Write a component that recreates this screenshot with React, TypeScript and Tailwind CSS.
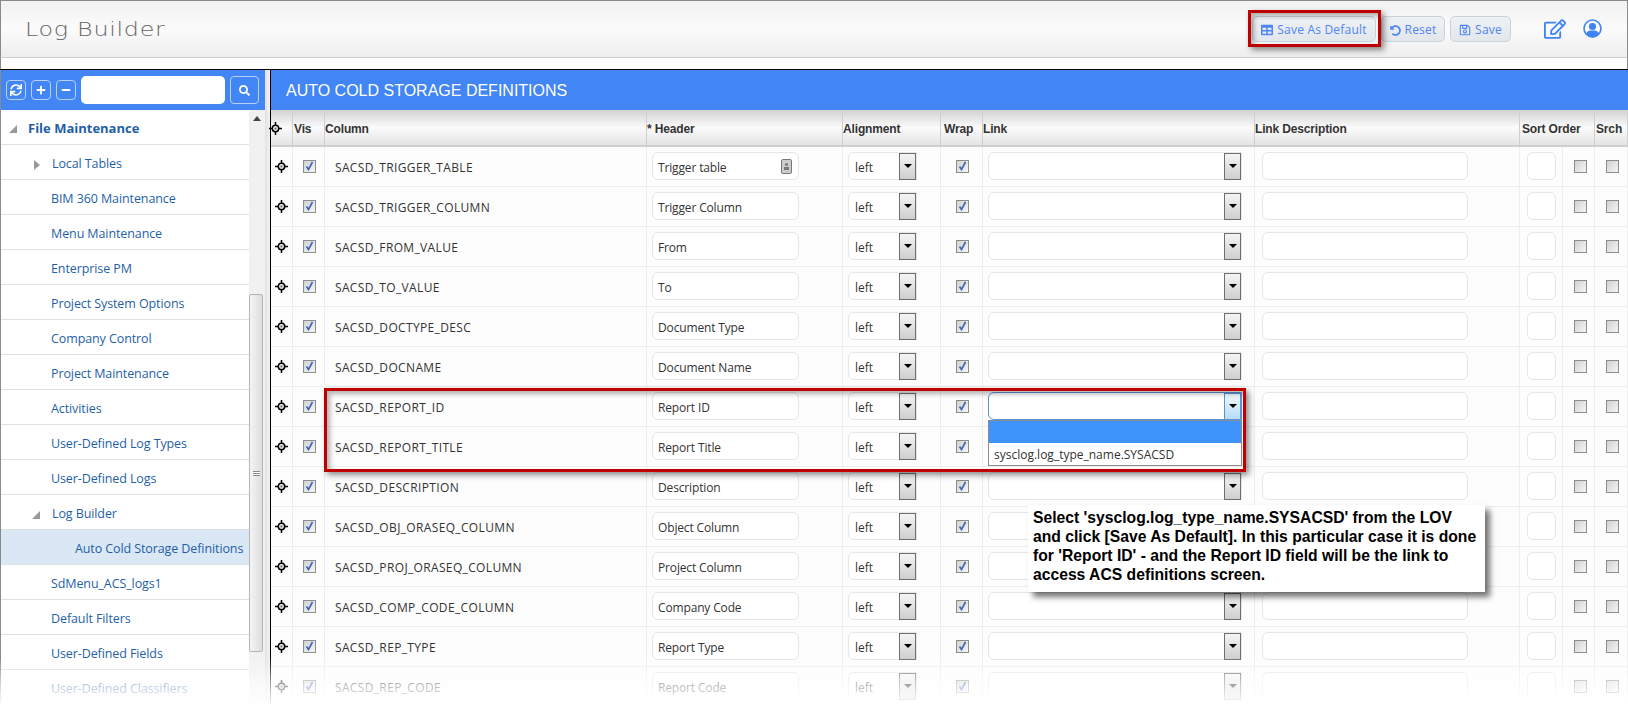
import React from "react";
import { FaTable, FaUndoAlt, FaRegSave, FaSync, FaPlus, FaMinus, FaSearch, FaRegEdit } from "react-icons/fa";

const GRID = "grid grid-cols-[22px_32px_322px_196px_98px_42px_272px_265px_43px_32px_33px]";
const UI = "font-['Open_Sans','Noto_Sans',sans-serif]";

const rows = [
  ["SACSD_TRIGGER_TABLE", "Trigger table"],
  ["SACSD_TRIGGER_COLUMN", "Trigger Column"],
  ["SACSD_FROM_VALUE", "From"],
  ["SACSD_TO_VALUE", "To"],
  ["SACSD_DOCTYPE_DESC", "Document Type"],
  ["SACSD_DOCNAME", "Document Name"],
  ["SACSD_REPORT_ID", "Report ID"],
  ["SACSD_REPORT_TITLE", "Report Title"],
  ["SACSD_DESCRIPTION", "Description"],
  ["SACSD_OBJ_ORASEQ_COLUMN", "Object Column"],
  ["SACSD_PROJ_ORASEQ_COLUMN", "Project Column"],
  ["SACSD_COMP_CODE_COLUMN", "Company Code"],
  ["SACSD_REP_TYPE", "Report Type"],
  ["SACSD_REP_CODE", "Report Code"],
];

const menu: [string, number, string?, boolean?][] = [
  ["File Maintenance", 28, "open", true],
  ["Local Tables", 52, "closed"],
  ["BIM 360 Maintenance", 51],
  ["Menu Maintenance", 51],
  ["Enterprise PM", 51],
  ["Project System Options", 51],
  ["Company Control", 51],
  ["Project Maintenance", 51],
  ["Activities", 51],
  ["User-Defined Log Types", 51],
  ["User-Defined Logs", 51],
  ["Log Builder", 52, "open"],
  ["Auto Cold Storage Definitions", 75],
  ["SdMenu_ACS_logs1", 51],
  ["Default Filters", 51],
  ["User-Defined Fields", 51],
  ["User-Defined Classifiers", 51],
];

function MoveIcon() {
  return (
    <svg width="13" height="13" viewBox="0 0 13 13" fill="none" stroke="#000">
      <circle cx="6.5" cy="6.5" r="3.2" strokeWidth="1.5" />
      <path d="M6.5 0v4M6.5 9v4M0 6.5h4M9 6.5h4" strokeWidth="1.5" />
      <rect x="5.5" y="5.5" width="2" height="2" fill="#666" stroke="none" />
    </svg>
  );
}

function UserIcon() {
  return (
    <svg width="19" height="20" viewBox="0 0 19 20" fill="#3f84f5">
      <circle cx="9.5" cy="9.5" r="8.5" fill="none" stroke="#3f84f5" strokeWidth="1.6" />
      <circle cx="9.5" cy="7.5" r="3.6" />
      <path d="M3 15c1-3 3-3.6 4-3.6h5c1 0 3 .6 4 3.6-1.5 2-4 3.4-6.5 3.4S4.500 17 3 15z" />
    </svg>
  );
}

function Check({ on = true }: { on?: boolean }) {
  return (
    <span className="flex h-[13px] w-[13px] items-center justify-center border border-[#8c8c8c] bg-gradient-to-br from-[#d2d2d2] to-[#f6f6f6]">
      {on && (
        <svg width="9" height="10" viewBox="0 0 9 10" fill="none">
          <path d="M1.500 5.500 3.500 8.500 7.500 1" stroke="#4a66b8" strokeWidth="1.700" />
        </svg>
      )}
    </span>
  );
}

function DropButton({ focus = false }: { focus?: boolean }) {
  return (
    <span
      className={
        "flex h-[27px] w-[17px] shrink-0 items-center justify-center border bg-gradient-to-b " +
        (focus ? "border-[#5b93d8] from-[#f3f9fe] to-[#b5dcf6]" : "border-[#6e6e6e] from-[#f4f4f4] to-[#cfcfcf]")
      }
    >
      <span className="h-0 w-0 border-x-[4px] border-t-[4px] border-x-transparent border-t-black" />
    </span>
  );
}

function Select({ width, value, focus = false }: { width: string; value?: string; focus?: boolean }) {
  return (
    <div className={`flex h-[28px] items-center justify-between rounded-l-[6px] border bg-white pl-[6px] text-[12px] text-[#333] ${width} ${focus ? "border-[#5b93d8]" : "border-[#e2e7ec]"}`}>
      <span className="pt-[4px]">{value}</span>
      <DropButton focus={focus} />
    </div>
  );
}

function Input({ width, value, icon = false }: { width: string; value?: string; icon?: boolean }) {
  return (
    <div className={`flex h-[28px] items-center justify-between rounded-[6px] border border-[#e2e7ec] bg-white pl-[5px] pr-[6px] text-[12px] tracking-[-0.15px] text-[#333] ${width}`}>
      <span className="pt-[3px]">{value}</span>
      {icon && (
        <span className="flex h-[15px] w-[11px] flex-col items-center justify-center gap-px rounded-[2px] border border-[#777] bg-[#ccc]">
          <span className="h-[3px] w-[3px] rounded-full bg-[#777]" />
          <span className="h-[3px] w-[5px] bg-[#777]" />
        </span>
      )}
    </div>
  );
}

function TopButton({ icon, label, width }: { icon: React.ReactNode; label: string; width: string }) {
  return (
    <button className={`flex h-[26px] items-center justify-center gap-[4px] rounded-[5px] border border-[#c9d3dc] bg-gradient-to-b from-[#eef1f4] to-[#e2e7ec] pt-[2px] text-[12px] tracking-[0.2px] text-[#4f86f7] ${width}`}>
      {icon}
      {label}
    </button>
  );
}

function ToolButton({ children }: { children: React.ReactNode }) {
  return (
    <button className="flex h-[20px] w-[20px] items-center justify-center rounded-[4px] border border-[#b9d0f8] text-white">
      {children}
    </button>
  );
}

function HeadCell({ children, className = "" }: { children?: React.ReactNode; className?: string }) {
  return (
    <div className={`flex items-center border-r border-[#cfcfcf] pt-[2px] font-['Liberation_Sans',sans-serif] text-[12px] font-bold tracking-[-0.15px] text-[#333] ${className}`}>
      {children}
    </div>
  );
}

function Cell({ children, className = "" }: { children?: React.ReactNode; className?: string }) {
  return <div className={`flex items-center border-r border-[#eeeeee] pb-px ${className}`}>{children}</div>;
}

export default function App() {
  return (
    <div className={`relative h-[707px] w-[1628px] overflow-hidden bg-white ${UI}`}>
      {/* top bar */}
      <header className="flex h-[58px] items-center justify-between border-x border-y border-x-[#8a8a8a] border-t-[#8a8a8a] border-b-[#cfcfcf] bg-gradient-to-b from-[#f2f2f2] via-[#fbfbfb] to-[#eeeeee] pl-[24px]">
        <h1 className="origin-left scale-x-[1.19] font-['DejaVu_Sans',sans-serif] text-[20px] font-extralight tracking-[0.6px] text-[#666666]">Log Builder</h1>
        <div className="flex items-center">
          <div className="flex items-center gap-[5px]">
            <TopButton width="w-[124px]" label="Save As Default" icon={<FaTable size={12} />} />
            <TopButton width="w-[64px]" label="Reset" icon={<FaUndoAlt size={11} />} />
            <TopButton width="w-[61px]" label="Save" icon={<FaRegSave size={12} />} />
          </div>
          <div className="ml-[33px] mr-[25px] flex items-center gap-[17px] text-[#3f84f5]">
            <FaRegEdit size={22} />
            <UserIcon />
          </div>
        </div>
      </header>
      <div className="h-[11px] border-l border-r border-[#8a8a8a] bg-white" />

      <main className="flex h-[638px] border-t border-t-black">
        {/* sidebar */}
        <aside className="flex w-[265px] shrink-0 flex-col border-l border-[#8a8a8a]">
          <div className="flex h-[40px] items-center gap-[5px] bg-[#4285f4] pl-[5px]">
            <ToolButton><FaSync size={12} /></ToolButton>
            <ToolButton><FaPlus size={10} /></ToolButton>
            <ToolButton><FaMinus size={10} /></ToolButton>
            <input aria-label="Search" className="h-[28px] w-[144px] rounded-[5px] bg-white" />
            <button className="flex h-[28px] w-[29px] items-center justify-center rounded-[4px] border border-[#b9d0f8] text-white">
              <FaSearch size={11} />
            </button>
          </div>
          <div className="flex min-h-0 flex-1">
            <nav className="w-[248px] shrink-0">
              {menu.map(([label, pad, arrow, bold], i) => (
                <div
                  key={label}
                  style={{ paddingLeft: pad - 1 }}
                  className={`relative flex h-[35px] items-center border-b border-[#dde2e7] text-[#1f5fa8] ${bold ? "pt-[3px] text-[13px] font-bold" : "pt-[5px] text-[12.500px] tracking-[-0.1px]"} ${i === 12 ? "bg-[#dae7f5]" : ""}`}
                >
                  {arrow === "open" && (
                    <span className={`absolute border-b-[8px] border-l-[8px] border-b-[#999] border-l-transparent ${bold ? "left-[8px]" : "left-[31px]"}`} />
                  )}
                  {arrow === "closed" && (
                    <span className="absolute left-[33px] border-y-[5px] border-l-[6px] border-y-transparent border-l-[#999]" />
                  )}
                  {label}
                </div>
              ))}
            </nav>
            <div className="relative w-[16px] shrink-0 bg-[#f1f1f1] pt-[184px]">
              <span className="absolute left-[4px] top-[6px] border-x-[4px] border-b-[5px] border-x-transparent border-b-[#444]" />
              <div className="flex h-[358px] w-[14px] items-center justify-center rounded-[2px] border border-[#b5b5b5] bg-gradient-to-r from-[#f4f4f4] to-[#dedede]">
                <span className="h-[5px] w-[7px] border-y border-[#888] bg-[linear-gradient(#fff_40%,#888_40%,#888_60%,#fff_60%)]" />
              </div>
            </div>
          </div>
        </aside>

        {/* splitter */}
        <div className="w-[5px] shrink-0 bg-gradient-to-r from-[#e2e2e2] to-[#f2f2f2]" />

        {/* table panel */}
        <section className="flex min-w-0 flex-1 flex-col border-l border-black">
          <div className="flex h-[40px] items-center bg-[#4285f4] pl-[15px] pt-[2px] font-['Liberation_Sans',sans-serif] text-[16px] text-white">
            AUTO COLD STORAGE DEFINITIONS
          </div>
          <div className={`${GRID} h-[37px] border-b-2 border-[#cfcfcf] bg-[linear-gradient(#d2d2d2,#fbfbfb_50%,#e4e4e4)]`}>
            <HeadCell className="-ml-[2px]"><MoveIcon /></HeadCell>
            <HeadCell className="pl-[1px]">Vis</HeadCell>
            <HeadCell>Column</HeadCell>
            <HeadCell>* Header</HeadCell>
            <HeadCell>Alignment</HeadCell>
            <HeadCell className="pl-[3px]">Wrap</HeadCell>
            <HeadCell>Link</HeadCell>
            <HeadCell>Link Description</HeadCell>
            <HeadCell className="col-span-2 pl-[2px]">Sort Order</HeadCell>
            <HeadCell className="pl-[1px]">Srch</HeadCell>
          </div>
          {rows.map(([col, head], i) => (
            <div key={col} className={`${GRID} h-[40px] shrink-0 border-b border-[#eeeeee] bg-[#fdfdfd] text-[12px] text-[#333]`}>
              <Cell className="justify-center"><MoveIcon /></Cell>
              <Cell className="justify-center pl-[2px]"><Check /></Cell>
              <Cell className="pl-[10px]"><span className="pt-[4px] tracking-[0.35px]">{col}</span></Cell>
              <Cell className="pl-[5px]"><Input width="w-[147px]" value={head} icon={i === 0} /></Cell>
              <Cell className="pl-[5px]"><Select width="w-[69px]" value="left" /></Cell>
              <Cell className="justify-center pl-[2px]"><Check /></Cell>
              <Cell className="pl-[5px]"><Select width="w-[254px]" focus={i === 6} /></Cell>
              <Cell className="pl-[7px]"><Input width="w-[206px]" /></Cell>
              <Cell className="justify-center"><Input width="w-[29px]" /></Cell>
              <Cell className="justify-center pl-[3px]"><Check on={false} /></Cell>
              <Cell className="justify-center pl-[2px]"><Check on={false} /></Cell>
            </div>
          ))}
        </section>
      </main>

      {/* annotations over the page */}
      <div className="absolute left-[1248px] top-[10px] h-[37px] w-[133px] border-[3px] border-[#c00000] shadow-[3px_3px_6px_rgba(0,0,0,0.45),inset_3px_3px_5px_rgba(0,0,0,0.3)]" />
      <div className="absolute left-[324px] top-[388px] h-[84px] w-[922px] border-[3px] border-[#c00000] shadow-[3px_3px_6px_rgba(0,0,0,0.45),inset_3px_3px_5px_rgba(0,0,0,0.3)]" />

      <div className="absolute left-[988px] top-[420px] h-[46px] w-[254px] border border-[#8c8c8c] bg-white text-[12px] text-[#333]">
        <div className="h-[22px] bg-[#3f94fb]" />
        <div className="flex h-[22px] items-center pl-[5px] pt-[2px]">sysclog.log_type_name.SYSACSD</div>
      </div>

      <div className="absolute left-[1028px] top-[505px] h-[87px] w-[457px] bg-white pl-[5px] pt-[3px] font-['Liberation_Sans',sans-serif] text-[15.700px] font-bold leading-[19px] text-black shadow-[5px_5px_6px_rgba(0,0,0,0.55)]">
        Select 'sysclog.log_type_name.SYSACSD' from the LOV<br />
        and click [Save As Default]. In this particular case it is done<br />
        for 'Report ID' - and the Report ID field will be the link to<br />
        access ACS definitions screen.
      </div>

      {/* torn-off fade at the bottom */}
      <div className="pointer-events-none absolute inset-x-0 bottom-0 h-[50px] bg-gradient-to-b from-white/0 via-white/60 to-white" />
    </div>
  );
}
